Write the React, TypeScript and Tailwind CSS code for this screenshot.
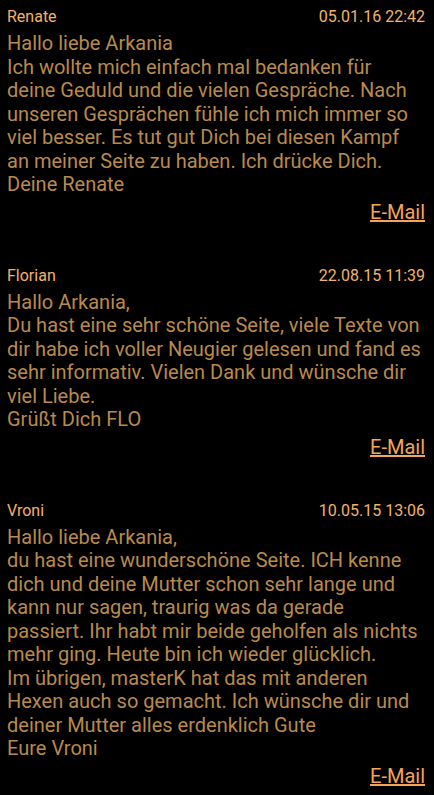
import React from 'react';

type Entry = {
  name: string;
  date: string;
  lines: string[];
};

const entries: Entry[] = [
  {
    name: 'Renate',
    date: '05.01.16 22:42',
    lines: [
      'Hallo liebe Arkania',
      'Ich wollte mich einfach mal bedanken für',
      'deine Geduld und die vielen Gespräche. Nach',
      'unseren Gesprächen fühle ich mich immer so',
      'viel besser. Es tut gut Dich bei diesen Kampf',
      'an meiner Seite zu haben. Ich drücke Dich.',
      'Deine Renate',
    ],
  },
  {
    name: 'Florian',
    date: '22.08.15 11:39',
    lines: [
      'Hallo Arkania,',
      'Du hast eine sehr schöne Seite, viele Texte von',
      'dir habe ich voller Neugier gelesen und fand es',
      'sehr informativ. Vielen Dank und wünsche dir',
      'viel Liebe.',
      'Grüßt Dich FLO',
    ],
  },
  {
    name: 'Vroni',
    date: '10.05.15 13:06',
    lines: [
      'Hallo liebe Arkania,',
      'du hast eine wunderschöne Seite. ICH kenne',
      'dich und deine Mutter schon sehr lange und',
      'kann nur sagen, traurig was da gerade',
      'passiert. Ihr habt mir beide geholfen als nichts',
      'mehr ging. Heute bin ich wieder glücklich.',
      'Im übrigen, masterK hat das mit anderen',
      'Hexen auch so gemacht. Ich wünsche dir und',
      'deiner Mutter alles erdenklich Gute',
      'Eure Vroni',
    ],
  },
];

export default function App() {
  return (
    <div className="min-h-[795px] w-[434px] bg-black pl-[7px] pr-[9px] pt-[7px] font-['Roboto',sans-serif]">
      <div className="flex flex-col gap-[42px]">
        {entries.map((e) => (
          <div key={e.name}>
            {/* header */}
            <div className="flex justify-between text-[16px] leading-[20px] text-[#f2b26c]">
              <span>{e.name}</span>
              <span>{e.date}</span>
            </div>
            <div className="mt-[5px] text-[20px] leading-[23.5px] text-[#b98a4c]">
              {e.lines.map((l, i) => (
                <div key={i} className="whitespace-nowrap">{l}</div>
              ))}
            </div>
            <div className="mt-[3px] text-right text-[20px] leading-[24px]">
              <a href="#" className="text-[#f3a55a] underline">E-Mail</a>
            </div>
          </div>
        ))}
      </div>
    </div>
  );
}
